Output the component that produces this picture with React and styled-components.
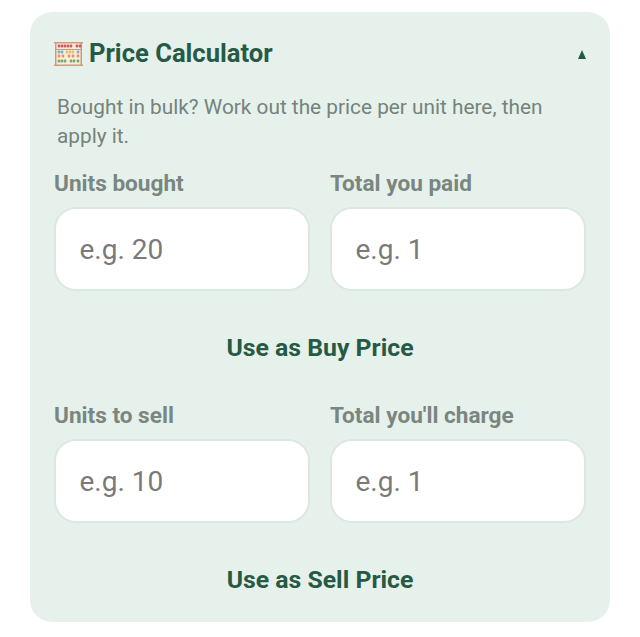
import React from "react";
import styled, { createGlobalStyle } from "styled-components";

const Global = createGlobalStyle`
  html, body { margin: 0; padding: 0; background: #fff; }
  body { font-family: Roboto, "Liberation Sans", sans-serif; }
  * { box-sizing: border-box; }
`;
const Page = styled.div`
  width: 640px; height: 637px; padding: 12px 30px 15px;
`;
const Card = styled.section`
  height: 610px; background: #e7f1ec; border-radius: 22px; padding: 24px 24px 0;
`;
const Header = styled.header`
  display: flex; align-items: center; justify-content: space-between;
  height: 36px;
`;
const TitleWrap = styled.div`
  display: flex; align-items: center; gap: 6px;
`;
const Title = styled.h2`
  margin: 0 0 2px; font-size: 25.6px; font-weight: 700; line-height: 34px;
  color: #265a44;
`;
const Caret = styled.span`
  width: 0; height: 0;
  border-left: 4.5px solid transparent; border-right: 4.5px solid transparent;
  border-bottom: 9px solid #265a44;
`;
const Note = styled.p`
  margin: 21px 0 0 3px; font-size: 20.8px; line-height: 29px; color: #74837c;
`;
const Grid = styled.div`
  display: grid; grid-template-columns: 256px 256px; gap: 20px;
  margin-top: ${p => p.$top}px;
`;
const Field = styled.label`
  display: flex; flex-direction: column; gap: 8px;
`;
const FieldLabel = styled.span`
  font-size: 22.6px; font-weight: 700; line-height: 30px; color: #7a8680;
`;
const Input = styled.input`
  width: 100%; height: 84px; border: 2px solid #dbe7e1; border-radius: 22px;
  background: #fff; padding: 0 23.5px; font: 400 28px Roboto, sans-serif; color: #333; outline: none;
  &::placeholder { color: #7a7a7a; opacity: 1; }
`;
const Action = styled.button`
  display: block; width: 100%; height: 36px; margin-top: ${p => p.$top}px;
  border: 0; background: none; padding: 0;
  font: 700 24.8px/36px Roboto, sans-serif; color: #265a44; text-align: center;
`;

const beads = [
  [5,5,"#d9535c"],[8,5,"#d9535c"],[11,5,"#d9535c"],[14,5,"#d9535c"],[17,5,"#d9535c"],[23,5,"#d9535c"],[26,5,"#d9535c"],
  [5,11,"#6cb0e0"],[8,11,"#6cb0e0"],[13,11,"#f0c060"],[16,11,"#f0c060"],[19,11,"#f0c060"],[24,11,"#6cb0e0"],
  [5,15,"#ef8f5e"],[9,15,"#ef8f5e"],[15,15,"#ef8f5e"],[19,15,"#ef8f5e"],[24,15,"#ef8f5e"],
  [5,20,"#72ad5c"],[8,20,"#72ad5c"],[11,20,"#72ad5c"],[17,20,"#72ad5c"],[20,20,"#72ad5c"],[24,20,"#72ad5c"],
];

const Abacus = () => (
  <svg width="29" height="26" viewBox="0 0 29 26" aria-hidden="true">
    <rect x="1" y="1" width="27" height="24" fill="#f6ecdf" />
    <path d="M1 1h1.5v24H1zM26.5 1H28v24h-1.5z" fill="#cf9a7c" />
    <path d="M0 1h29v1.5H0zM0 23.5h29V25H0zM2 8h25v1H2z" fill="#d09a7b" />
    {beads.map(([x, y, c], i) => (
      <rect key={i} x={x - 1.3} y={y - 1.5} width="2.6" height="3" rx="1" fill={c} />
    ))}
  </svg>
);

const Row = ({ top, a, b }) => (
  <Grid $top={top}>
    {[a, b].map(([label, ph]) => (
      <Field key={label}>
        <FieldLabel>{label}</FieldLabel>
        <Input placeholder={ph} />
      </Field>
    ))}
  </Grid>
);

export default function App() {
  return (
    <Page>
      <Global />
      <Card>
        <Header>
          <TitleWrap><Abacus /><Title>Price Calculator</Title></TitleWrap>
          <Caret />
        </Header>
        <Note>Bought in bulk? Work out the price per unit here, then apply it.</Note>
        <Row top={18} a={["Units bought", "e.g. 20"]} b={["Total you paid", "e.g. 1"]} />
        <Action $top={39}>Use as Buy Price</Action>
        <Row top={35} a={["Units to sell", "e.g. 10"]} b={["Total you'll charge", "e.g. 1"]} />
        <Action $top={39}>Use as Sell Price</Action>
      </Card>
    </Page>
  );
}
